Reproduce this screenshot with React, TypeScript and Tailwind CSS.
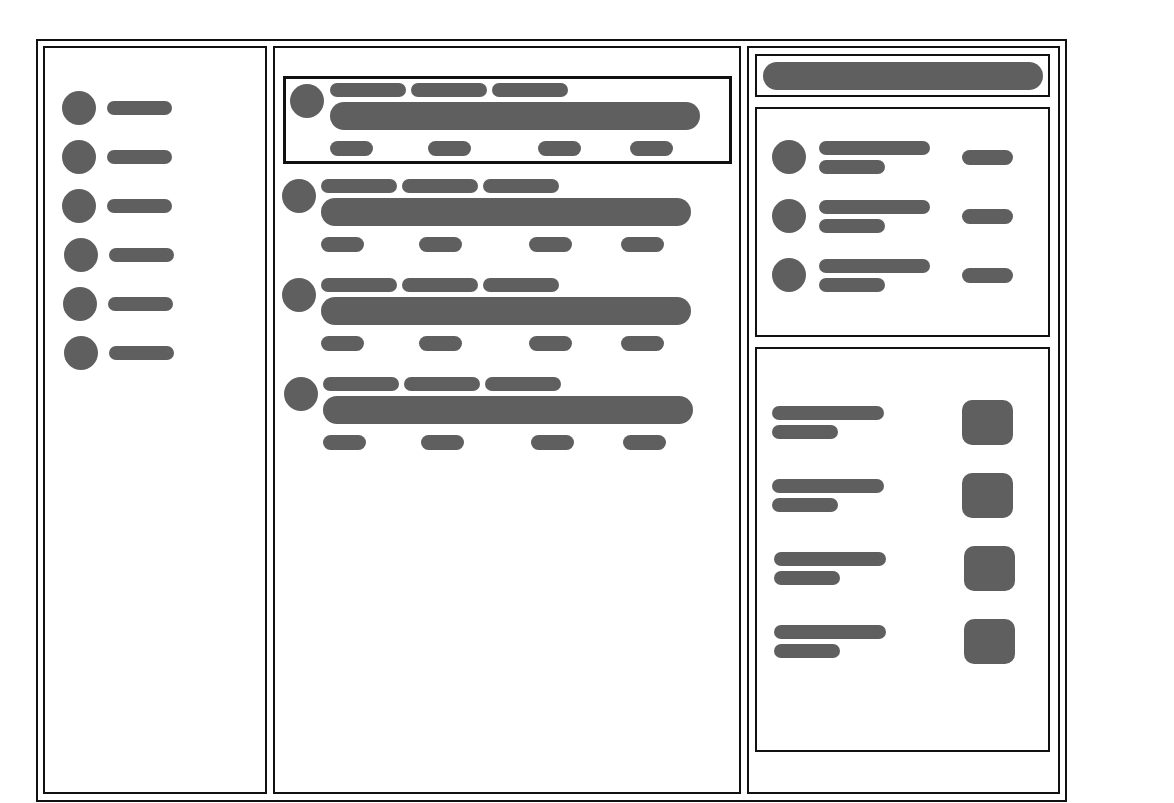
import React from 'react';

const fill = 'bg-[#5f5f5f]';

const SideItem: React.FC<{ shift: number }> = ({ shift }) => (
  <div className="flex items-center gap-[11px]" style={{ marginLeft: shift }}>
    <div className={`w-[34px] h-[34px] rounded-full ${fill}`} />
    <div className={`w-[65px] h-[14px] rounded-full ${fill}`} />
  </div>
);

const PostBody: React.FC = () => (
  <div className="flex flex-col">
    <div className="flex gap-[5px]">
      <div className={`w-[76px] h-[14px] rounded-full ${fill}`} />
      <div className={`w-[76px] h-[14px] rounded-full ${fill}`} />
      <div className={`w-[76px] h-[14px] rounded-full ${fill}`} />
    </div>
    <div className={`mt-[5px] w-[370px] h-[28px] rounded-full ${fill}`} />
    <div className="mt-[11px] flex">
      <div className={`w-[43px] h-[15px] rounded-full ${fill}`} />
      <div className={`ml-[55px] w-[43px] h-[15px] rounded-full ${fill}`} />
      <div className={`ml-[67px] w-[43px] h-[15px] rounded-full ${fill}`} />
      <div className={`ml-[49px] w-[43px] h-[15px] rounded-full ${fill}`} />
    </div>
  </div>
);

const Post: React.FC<{ shift: number }> = ({ shift }) => (
  <div className="h-[99px] flex gap-[5px]" style={{ marginLeft: 7 + shift }}>
    <div className={`w-[34px] h-[34px] rounded-full shrink-0 ${fill}`} />
    <PostBody />
  </div>
);

const Person: React.FC = () => (
  <div className="flex items-center">
    <div className={`w-[34px] h-[34px] rounded-full shrink-0 ${fill}`} />
    <div className="ml-[13px] w-[143px] flex flex-col gap-[5px]">
      <div className={`w-[111px] h-[14px] rounded-full ${fill}`} />
      <div className={`w-[66px] h-[14px] rounded-full ${fill}`} />
    </div>
    <div className={`w-[51px] h-[15px] rounded-full ${fill}`} />
  </div>
);

const Trend: React.FC<{ shift: number }> = ({ shift }) => (
  <div className="flex items-center" style={{ marginLeft: shift }}>
    <div className="w-[190px] flex flex-col gap-[5px]">
      <div className={`w-[112px] h-[14px] rounded-full ${fill}`} />
      <div className={`w-[66px] h-[14px] rounded-full ${fill}`} />
    </div>
    <div className={`w-[51px] h-[45px] rounded-[10px] ${fill}`} />
  </div>
);

export default function App() {
  return (
    <div className="min-h-screen bg-white pt-[39px] pl-[36px]">
      <div className="w-[1031px] h-[763px] border-2 border-[#111] flex gap-[6px] pt-[5px] pl-[5px] pr-[5px] pb-[6px]">

        {/* Sidebar */}
        <div className="w-[224px] border-2 border-[#111] pt-[43px] pl-[17px] flex flex-col gap-[15px]">
          {[0, 0, 0, 2, 1, 2].map((s, i) => (
            <SideItem key={i} shift={s} />
          ))}
        </div>

        {/* Feed */}
        <div className="w-[468px] border-2 border-[#111] flex flex-col">
          <div className="ml-[8px] mt-[28px] w-[449px] border-[3px] border-[#111] pt-[4px] pl-[4px] pb-[5px] flex gap-[6px]">
            <div className={`mt-[1px] w-[34px] h-[34px] rounded-full shrink-0 ${fill}`} />
            <PostBody />
          </div>
          <div className="mt-[15px] flex flex-col">
            <Post shift={0} />
            <Post shift={0} />
            <Post shift={2} />
          </div>
        </div>

        {/* Right column */}
        <div className="w-[313px] border-2 border-[#111] pl-[6px] pt-[6px] flex flex-col">
          <div className="w-[295px] h-[43px] border-2 border-[#111] pt-[6px] pl-[6px]">
            <div className={`w-[280px] h-[28px] rounded-full ${fill}`} />
          </div>
          <div className="mt-[10px] w-[295px] h-[230px] border-2 border-[#111] pt-[31px] pl-[15px] flex flex-col gap-[25px]">
            <Person />
            <Person />
            <Person />
          </div>
          <div className="mt-[10px] w-[295px] h-[405px] border-2 border-[#111] pt-[51px] pl-[15px] flex flex-col gap-[28px]">
            <Trend shift={0} />
            <Trend shift={0} />
            <Trend shift={2} />
            <Trend shift={2} />
          </div>
        </div>

      </div>
    </div>
  );
}
